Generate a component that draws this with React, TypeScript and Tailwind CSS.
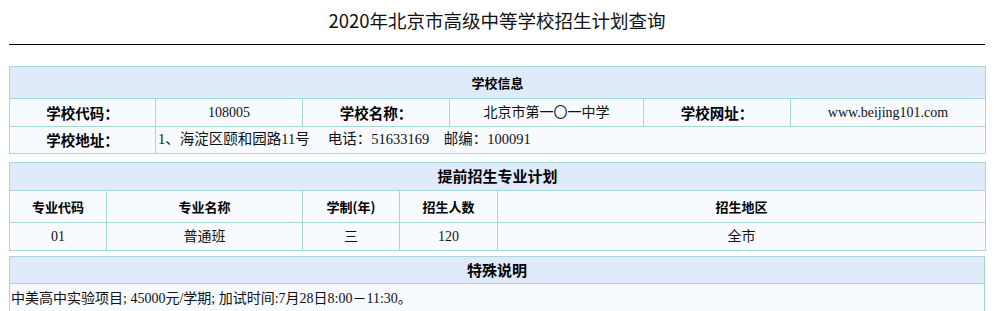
const cell = 'border border-[#a9d8d2]';
const serif = "font-['Liberation_Serif','Noto_Sans_CJK_SC',serif]";
const sans = "font-['Noto_Sans_CJK_SC','Liberation_Sans',sans-serif]";

function Label({ children }: { children: React.ReactNode }) {
  return (
    <td className={`${cell} ${sans} text-center text-[14.5px] font-bold text-black`}>{children}</td>
  );
}

function Value({ children }: { children: React.ReactNode }) {
  return <td className={`${cell} ${serif} text-center text-[14px] text-[#111]`}>{children}</td>;
}

export default function App() {
  return (
    <div className="min-h-screen bg-white px-[9px] pt-[8px]">
      <h1 className={`${sans} text-center text-[18.5px] leading-[24px] text-[#111]`}>
        2020年北京市高级中等学校招生计划查询
      </h1>
      <div className="mt-[12px] h-px bg-black" />

      {/* 学校信息 */}
      <table className="mt-[21px] w-full table-fixed border-collapse">
        <colgroup>
          <col className="w-[146px]" />
          <col className="w-[147px]" />
          <col className="w-[147px]" />
          <col className="w-[194px]" />
          <col className="w-[147px]" />
          <col className="w-[195px]" />
        </colgroup>
        <tbody>
          <tr className="h-[32px] bg-[#dfebfb]">
            <td colSpan={6} className={`${cell} ${sans} text-center text-[13px] font-bold text-black`}>
              学校信息
            </td>
          </tr>
          <tr className="h-[28px] bg-[#f7fbff]">
            <Label>学校代码：</Label>
            <Value>108005</Value>
            <Label>学校名称：</Label>
            <Value>北京市第一〇一中学</Value>
            <Label>学校网址：</Label>
            <Value>www.beijing101.com</Value>
          </tr>
          <tr className="h-[27px] bg-[#f7fbff]">
            <Label>学校地址：</Label>
            <td colSpan={5} className={`${cell} ${serif} pl-[2px] text-left text-[14.5px] text-[#111]`}>
              1、海淀区颐和园路11号&nbsp;&nbsp;&nbsp;&nbsp;&nbsp;电话：51633169&nbsp;&nbsp;&nbsp;&nbsp;邮编：100091
            </td>
          </tr>
        </tbody>
      </table>

      {/* 提前招生专业计划 */}
      <table className="mt-[8px] w-full table-fixed border-collapse">
        <colgroup>
          <col className="w-[97px]" />
          <col className="w-[196px]" />
          <col className="w-[97px]" />
          <col className="w-[98px]" />
          <col className="w-[488px]" />
        </colgroup>
        <tbody>
          <tr className="h-[28px] bg-[#dfebfb]">
            <td colSpan={5} className={`${cell} ${sans} text-center text-[15px] font-bold text-black`}>
              提前招生专业计划
            </td>
          </tr>
          <tr className={`h-[32px] bg-[#f7fbff] ${sans} text-[13px] font-bold text-black`}>
            <td className={`${cell} text-center`}>专业代码</td>
            <td className={`${cell} text-center`}>专业名称</td>
            <td className={`${cell} text-center`}>学制(年)</td>
            <td className={`${cell} text-center`}>招生人数</td>
            <td className={`${cell} text-center`}>招生地区</td>
          </tr>
          <tr className="h-[28px] bg-[#f7fbff]">
            <Value>01</Value>
            <Value>普通班</Value>
            <Value>三</Value>
            <Value>120</Value>
            <Value>全市</Value>
          </tr>
        </tbody>
      </table>

      {/* 特殊说明 */}
      <table className="mt-[5px] w-full table-fixed border-collapse">
        <tbody>
          <tr className="h-[27px] bg-[#dfebfb]">
            <td className={`${cell} ${sans} text-center text-[15px] font-bold text-black`}>特殊说明</td>
          </tr>
          <tr className="h-[30px] bg-[#f7fbff]">
            <td className={`${cell} ${serif} pl-[1px] text-left text-[14px] text-[#111]`}>
              中美高中实验项目; 45000元/学期; 加试时间:7月28日8:00－11:30。
            </td>
          </tr>
        </tbody>
      </table>
    </div>
  );
}
